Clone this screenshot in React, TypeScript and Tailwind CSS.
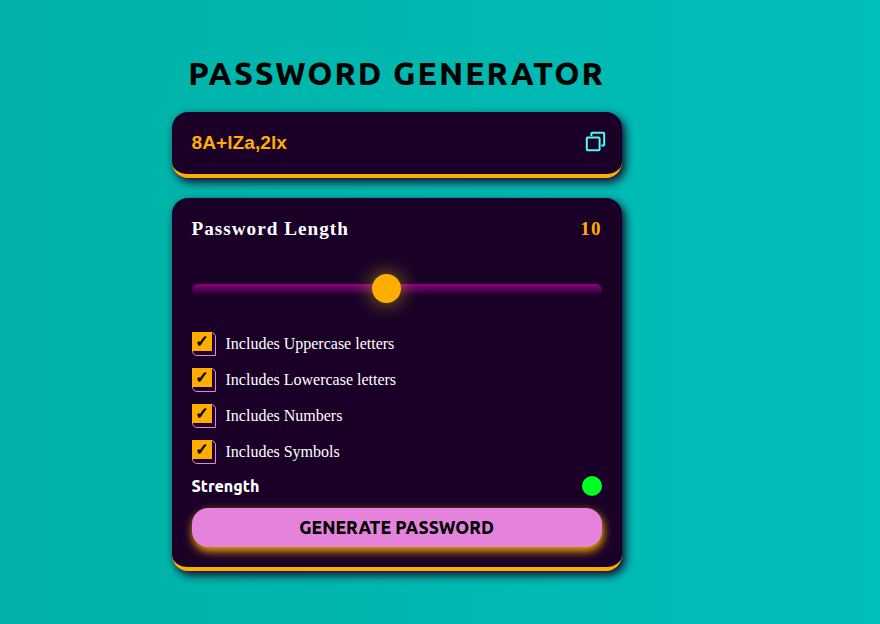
import React from "react";

const TITLE_FONT = "font-['Ubuntu','Noto_Sans',sans-serif]";
const SERIF_FONT = "font-['Liberation_Serif',serif]";

function CopyIcon() {
  return (
    <svg width="21" height="21" viewBox="0 0 21 21" fill="none" stroke="#4dfbf8" strokeWidth="2" strokeLinejoin="round">
      <rect x="1.8" y="6.4" width="12.8" height="12.8" rx="0.9" />
      <path d="M6.4 5V2.7a.9.9 0 0 1 .9-.9h11a.9.9 0 0 1 .9.9v11a.9.9 0 0 1-.9.9h-2.1" />
    </svg>
  );
}

const options = [
  "Includes Uppercase letters",
  "Includes Lowercase letters",
  "Includes Numbers",
  "Includes Symbols",
];

function Option({ label }: { label: string }) {
  return (
    <label className="flex h-6 items-center gap-[10px]">
      <span className="flex size-6 shrink-0 items-start rounded-tr-[5px] rounded-bl-[5px] border border-[#e583dc]">
        <span className="-mt-px -ml-px flex h-[19px] w-5 shrink-0 items-center justify-center bg-[#ffae00] font-['DejaVu_Sans',sans-serif] text-[16px] leading-[19px] font-bold text-black [-webkit-text-stroke:0.8px_black]">
          ✓
        </span>
      </span>
      <span className={`${SERIF_FONT} -ml-[0.5px] text-base leading-6 text-white`}>{label}</span>
    </label>
  );
}

const CARD =
  "w-full rounded-2xl border-b-4 border-[#ffae00] bg-[#1a0027] px-5 shadow-[3px_4px_10px_#1a0027]";

export default function App() {
  return (
    <main className="h-[624px] w-full overflow-hidden bg-linear-to-r from-[#00b2a7] to-[#00beb9]">
      <div className="ml-[172px] flex w-[450px] flex-col items-center pt-[51px]">
        <h1 className={`${TITLE_FONT} mr-px h-[61px] text-[32px] leading-[44px] font-extrabold tracking-[2px] whitespace-nowrap text-black`}>
          PASSWORD GENERATOR
        </h1>
        <section className={`${CARD} flex h-[66px] items-center justify-between pr-4`}>
          <span className="-ml-[0.5px] font-['Liberation_Sans',sans-serif] text-[19.2px] font-bold text-[#ffae00]">8A+lZa,2lx</span>
          <button className="mb-[3px]" aria-label="Copy"><CopyIcon /></button>
        </section>
        <section className={`${CARD} mt-5 h-[373px]`}>
          <div className={`${SERIF_FONT} -ml-[0.5px] flex h-[62px] items-center justify-between pr-[0.5px] text-[19.2px] font-bold tracking-[1px]`}>
            <span className="text-white">Password Length</span>
            <span className="text-[#ffae00]">10</span>
          </div>
          <div className="flex h-[58px] items-center">
            <div className="mt-[1px] flex h-3 w-full items-center rounded-[6px] bg-linear-to-b from-[#8f0082] to-[#1a0027]">
              <div className="-mt-[2px] ml-[180px] size-[29px] shrink-0 rounded-full bg-[#ffae00] shadow-[0_0_20px_rgba(255,230,0,0.55)]" />
            </div>
          </div>
          <div className="mt-[14px] flex flex-col gap-3">
            {options.map((label) => <Option key={label} label={label} />)}
          </div>
          <div className="mt-3 flex h-5 items-center justify-between">
            <span className={`${TITLE_FONT} -ml-[0.5px] text-[16px] leading-5 font-extrabold text-white`}>Strength</span>
            <span className="size-5 rounded-full bg-[#00ff22]" />
          </div>
          <button className={`${TITLE_FONT} mt-3 flex h-[39px] w-full items-center justify-center rounded-2xl bg-[#e583dc] pt-px pr-px text-[17.6px] font-extrabold text-black shadow-[1px_4px_10px_#ffae00]`}>
            GENERATE PASSWORD
          </button>
        </section>
      </div>
    </main>
  );
}
